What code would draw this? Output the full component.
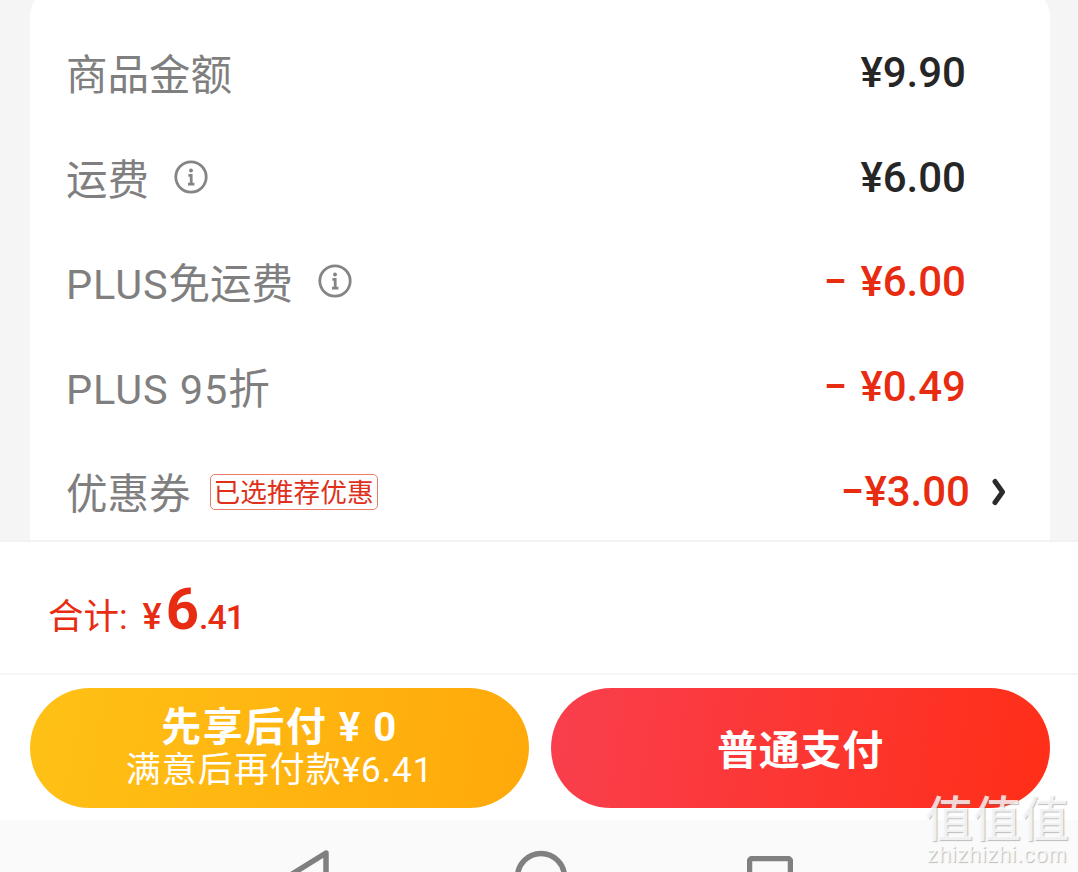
<div class="page">
  <section class="card">
    <div class="row">
      <div class="label">商品金额</div>
      <div class="amount">¥9.90</div>
    </div>
    <div class="row">
      <div class="label">运费
        <svg class="info" viewBox="0 0 34 34"><circle cx="17" cy="17" r="15.2" /><circle class="dot" cx="17" cy="10.6" r="2" /><path d="M14.4 15.4h2.8v8.6M14 24.2h6.4" /></svg>
      </div>
      <div class="amount">¥6.00</div>
    </div>
    <div class="row">
      <div class="label"><span class="lat">PLUS</span>免运费
        <svg class="info" viewBox="0 0 34 34"><circle cx="17" cy="17" r="15.2" /><circle class="dot" cx="17" cy="10.6" r="2" /><path d="M14.4 15.4h2.8v8.6M14 24.2h6.4" /></svg>
      </div>
      <div class="amount red"><span class="minus">−</span>¥6.00</div>
    </div>
    <div class="row">
      <div class="label"><span class="lat">PLUS 95</span>折</div>
      <div class="amount red"><span class="minus">−</span>¥0.49</div>
    </div>
    <div class="row last">
      <div class="label">优惠券<span class="tag">已选推荐优惠</span></div>
      <div class="coupon">
        <span class="amount red">−¥3.00</span>
        <svg class="chev" viewBox="0 0 14 28"><path d="M3 3.5 10.5 14 3 24.5" /></svg>
      </div>
    </div>
  </section>

  <section class="total">
    <span class="t-label">合计:</span>
    <span class="t-yen">¥</span><span class="t-big">6</span><span class="t-small">.41</span>
  </section>

  <section class="actions">
    <button class="btn later">
      <span class="l1">先享后付 ¥ 0</span>
      <span class="l2">满意后再付款¥6.41</span>
    </button>
    <button class="btn pay">普通支付</button>
  </section>

  <nav class="nav">
    <svg class="back" viewBox="0 0 46 40"><path d="M41 3 4 26 41 49Z" /></svg>
    <svg class="home" viewBox="0 0 52 40"><circle cx="26" cy="27" r="23.5" /></svg>
    <svg class="recent" viewBox="0 0 46 40"><rect x="2.5" y="2.5" width="41" height="50" rx="3" /></svg>
  </nav>

  <div class="mark">
    <div class="mark-cn">值值值</div>
    <div class="mark-en">zhizhizhi.com</div>
  </div>
</div>

<style>
  :global(body) {
    margin: 0;
    background: #f5f5f5;
  }
  .page {
    position: relative;
    width: 1078px;
    height: 872px;
    overflow: hidden;
    display: flex;
    flex-direction: column;
    background: #f5f5f5;
    font-family: "Noto Sans CJK SC", sans-serif;
  }
  .card {
    box-sizing: border-box;
    height: 550px;
    flex: none;
    margin: -10px 28px 0 30px;
    padding: 32px 41px 0 37px;
    background: #fff;
    border-radius: 26px 26px 0 0;
    display: flex;
    flex-direction: column;
  }
  .row {
    height: 104.6px;
    flex: none;
    display: flex;
    align-items: center;
    justify-content: space-between;
    padding-right: 43px;
  }
  .row.last {
    padding-right: 0;
  }
  .label {
    display: flex;
    align-items: center;
    font-size: 41.5px;
    line-height: 60px;
    color: #7f7f7f;
    font-family: "Roboto", "Noto Sans CJK SC", sans-serif;
    margin: 4px 0 0 -1px;
  }
  .lat {
    letter-spacing: 0.9px;
    white-space: pre;
  }
  .info {
    width: 34px;
    height: 34px;
    margin: -8px 0 0 25px;
    fill: none;
    stroke: #858585;
    stroke-width: 2.8;
  }
  .info .dot {
    fill: #858585;
    stroke: none;
  }
  .amount {
    font-family: "Roboto", sans-serif;
    font-size: 42px;
    font-weight: 500;
    line-height: 60px;
    color: #262626;
    display: flex;
    align-items: center;
    margin-bottom: 2px;
  }
  .amount.red {
    color: #e82c12;
  }
  .minus {
    margin-right: 13px;
  }
  .tag {
    box-sizing: border-box;
    height: 36px;
    margin: -6px 0 0 19px;
    padding: 0 3px;
    border: 1px solid #ec7a6a;
    border-radius: 5px;
    font-family: "Noto Sans CJK SC", sans-serif;
    font-size: 26.7px;
    line-height: 32px;
    color: #e0301c;
    white-space: nowrap;
  }
  .coupon {
    display: flex;
    align-items: center;
  }
  .chev {
    width: 14px;
    height: 28px;
    margin: -2px 3px 0 22px;
    fill: none;
    stroke: #2b2b2b;
    stroke-width: 5;
    stroke-linecap: round;
    stroke-linejoin: round;
  }
  .total {
    box-sizing: border-box;
    height: 135px;
    flex: none;
    background: #fff;
    border-top: 2px solid #f2f2f2;
    border-bottom: 2px solid #f5f5f5;
    padding: 35px 0 0 48px;
    display: flex;
    align-items: baseline;
    color: #e82c12;
    font-family: "Roboto", sans-serif;
  }
  .t-label {
    font-family: "Roboto", "Noto Sans CJK SC", sans-serif;
    font-size: 35.5px;
    margin-right: 15px;
  }
  .t-yen {
    font-size: 36px;
    font-weight: 500;
    margin-right: 4px;
  }
  .t-big {
    font-size: 58px;
    font-weight: 700;
    line-height: 64px;
  }
  .t-small {
    font-size: 34px;
    font-weight: 500;
    letter-spacing: -1px;
  }
  .actions {
    flex: none;
    height: 145px;
    box-sizing: border-box;
    padding: 13px 28px 0 30px;
    background: #fff;
    display: flex;
    gap: 22px;
  }
  .btn {
    width: 499px;
    height: 120px;
    border: 0;
    padding: 0;
    border-radius: 60px;
    color: #fff;
    display: flex;
    flex-direction: column;
    align-items: center;
    justify-content: center;
    font-family: "Roboto", "Noto Sans CJK SC", sans-serif;
  }
  .later {
    background: linear-gradient(100deg, #ffc116, #ffa90a);
  }
  .pay {
    background: linear-gradient(100deg, #f93f4e, #ff2e17);
    font-size: 41px;
    font-weight: 700;
    letter-spacing: 0.8px;
    padding-bottom: 2px;
  }
  .l1 {
    font-size: 40px;
    font-weight: 700;
    line-height: 46px;
    letter-spacing: 1.5px;
  }
  .l2 {
    font-size: 35px;
    line-height: 40px;
    letter-spacing: 1px;
  }
  .nav {
    flex: 1;
    background: #fafafa;
    display: flex;
    justify-content: center;
    align-items: flex-start;
    padding-top: 32px;
    position: relative;
  }
  .nav svg {
    flex: none;
    height: 40px;
    fill: none;
    stroke: #808080;
    stroke-width: 5.5;
    stroke-linejoin: round;
  }
  .back {
    width: 46px;
    margin: -2px 184px 0 0;
  }
  .home {
    width: 52px;
    margin: -2px 180px 0 0;
  }
  .recent {
    width: 46px;
    margin-top: 4px;
  }
  .mark {
    position: absolute;
    left: 924px;
    top: 789px;
    width: 146px;
    text-align: center;
    color: rgba(255, 255, 255, 0.78);
    text-shadow: 1px 1px 1px rgba(110, 110, 110, 0.45);
    white-space: nowrap;
  }
  .mark-cn {
    font-size: 48px;
    line-height: 52px;
    font-weight: 500;
  }
  .mark-en {
    font-family: "Liberation Sans", sans-serif;
    font-size: 22px;
    line-height: 22px;
    letter-spacing: 0.6px;
    margin-top: 3px;
  }
</style>
